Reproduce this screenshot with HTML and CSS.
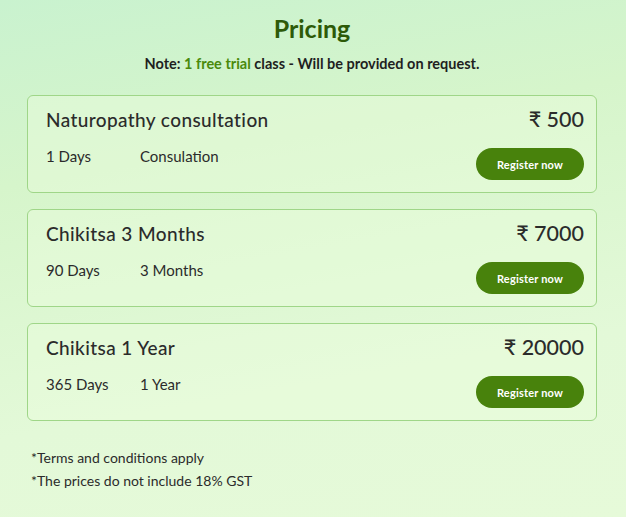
FILE: index.html
```html
<!DOCTYPE html>
<html lang="en">
<head>
<meta charset="utf-8">
<title>Pricing</title>
<link rel="stylesheet" href="styles.css">
</head>
<body>
<main class="page">
  <h1 class="title">Pricing</h1>
  <p class="note">Note: <span class="hl">1 free trial</span> class - Will be provided on request.</p>

  <section class="plans">
    <article class="plan">
      <div class="plan-top">
        <h2 class="plan-name">Naturopathy consultation</h2>
        <div class="price">₹ 500</div>
      </div>
      <div class="plan-bottom">
        <div class="meta"><span class="days">1 Days</span><span class="dur">Consulation</span></div>
        <button class="btn">Register now</button>
      </div>
    </article>
    <article class="plan">
      <div class="plan-top">
        <h2 class="plan-name">Chikitsa 3 Months</h2>
        <div class="price">₹ 7000</div>
      </div>
      <div class="plan-bottom">
        <div class="meta"><span class="days">90 Days</span><span class="dur">3 Months</span></div>
        <button class="btn">Register now</button>
      </div>
    </article>
    <article class="plan">
      <div class="plan-top">
        <h2 class="plan-name">Chikitsa 1 Year</h2>
        <div class="price">₹ 20000</div>
      </div>
      <div class="plan-bottom">
        <div class="meta"><span class="days">365 Days</span><span class="dur">1 Year</span></div>
        <button class="btn">Register now</button>
      </div>
    </article>
  </section>

  <div class="terms">
    <p>*Terms and conditions apply</p>
    <p>*The prices do not include 18% GST</p>
  </div>
</main>
</body>
</html>
```

FILE: styles.css
```css
* { box-sizing: border-box; }
html, body { margin: 0; height: 100%; }
body {
  font-family: "Lato", "Noto Sans", sans-serif;
  color: #2b2b2b;
  background: linear-gradient(170deg, #c9f2cf 0%, #d6f5cb 30%, #e3f9d8 70%, #e6fad9 100%);
  min-height: 517px;
}
.page {
  width: 570px;
  margin: 0 auto;
  padding-top: 12px;
  transform: translateX(-1px);
}
.title {
  margin: 0;
  text-align: center;
  font-size: 25px;
  font-weight: 700;
  color: #2d5a08;
  line-height: 32px;
}
.note {
  margin: 12px 0 0;
  text-align: center;
  font-size: 14.5px;
  font-weight: 700;
  color: #1f1f1f;
  line-height: 16px;
}
.hl { color: #4a8a0c; }
.plans {
  margin-top: 23px;
  display: flex;
  flex-direction: column;
  gap: 16px;
}
.plan {
  height: 98px;
  border: 1px solid #9fd688;
  border-radius: 6px;
  background: rgba(236, 252, 222, 0.45);
  padding: 11px 12px 12px 18px;
  display: flex;
  flex-direction: column;
  justify-content: space-between;
}
.plan-top {
  display: flex;
  justify-content: space-between;
  align-items: baseline;
}
.plan-name {
  margin: 0;
  font-size: 19px;
  font-weight: 500;
  color: #2b2b2b;
  letter-spacing: 0.4px;
  line-height: 24px;
}
.price {
  font-size: 21.5px;
  font-weight: 500;
  color: #2b2b2b;
  line-height: 24px;
}
.plan-bottom {
  display: flex;
  justify-content: space-between;
  align-items: center;
}
.meta {
  display: flex;
  font-size: 15px;
  color: #2b2b2b;
  margin-top: -17px;
}
.days { width: 94px; }
.btn {
  width: 108px;
  height: 32px;
  border: none;
  border-radius: 16px;
  background: #48820c;
  color: #fff;
  font-family: inherit;
  font-size: 11px;
  font-weight: 700;
  letter-spacing: 0.2px;
  padding: 0;
}
.terms {
  margin-top: 25px;
  padding-left: 4px;
  font-size: 14px;
  color: #2b2b2b;
}
.terms p { margin: 0; line-height: 23px; }
```
